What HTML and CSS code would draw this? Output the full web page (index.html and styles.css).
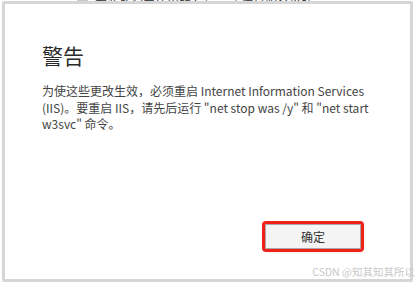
FILE: index.html
```html
<!DOCTYPE html>
<html lang="zh-CN">
<head>
<meta charset="utf-8">
<link rel="stylesheet" href="styles.css">
</head>
<body>
<div class="peek"><span class="peek-box"></span><span class="peek-text">在此处配置使用的 Internet 信息服务(IIS)。</span></div>
<div class="dialog">
  <h1 class="title">警告</h1>
  <p class="msg">为使这些更改生效，必须重启 Internet Information Services (IIS)。要重启 IIS，请先后运行 "net stop was /y" 和 "net start w3svc" 命令。</p>
  <div class="spacer"></div>
  <div class="actions">
    <div class="highlight"><button class="btn">确定</button></div>
  </div>
</div>
<div class="watermark">CSDN @知其知其所以</div>
</body>
</html>
```
FILE: styles.css
```css
html, body {
  margin: 0;
  padding: 0;
  background: #fff;
}
body {
  width: 416px;
  height: 285px;
  position: relative;
  overflow: hidden;
  font-family: "Noto Sans CJK SC", "Open Sans", sans-serif;
}
.peek {
  height: 1px;
  overflow: hidden;
  display: flex;
  align-items: flex-end;
  padding-left: 77px;
  gap: 7px;
}
.peek-box {
  width: 11px;
  height: 8px;
  background: #c8c8c8;
  flex: none;
  margin-bottom: -4px;
}
.peek-text {
  font-size: 12px;
  line-height: 12px;
  color: #333;
  margin-bottom: -9px;
  white-space: nowrap;
}
.dialog {
  margin-left: 2px;
  width: 405px;
  height: 275px;
  border: 3px solid #d6d6d6;
  border-radius: 2px;
  background: #fff;
  display: flex;
  flex-direction: column;
  padding: 0;
}
.title {
  margin: 37px 0 0 37px;
  font-size: 21px;
  font-weight: normal;
  line-height: 28px;
  color: #2b2b2b;
}
.msg {
  margin: 14px 38px 0 37px;
  font-size: 12px;
  line-height: 16.7px;
  color: #444;
}
.spacer {
  flex: 1;
}
.actions {
  display: flex;
  justify-content: flex-end;
  padding: 0 46px 27px 0;
}
.highlight {
  border: 3px solid #f0201a;
  border-radius: 4px;
  padding: 0;
  display: flex;
}
.btn {
  width: 96px;
  height: 25px;
  border: 1px solid #a8a8a8;
  background: #f4f4f4;
  font-family: "Noto Sans CJK SC", sans-serif;
  font-size: 12px;
  color: #333;
  padding: 0;
}
.watermark {
  position: absolute;
  right: 1px;
  top: 265px;
  font-size: 10.5px;
  line-height: 13px;
  color: #c9c9c9;
  white-space: nowrap;
}
```
